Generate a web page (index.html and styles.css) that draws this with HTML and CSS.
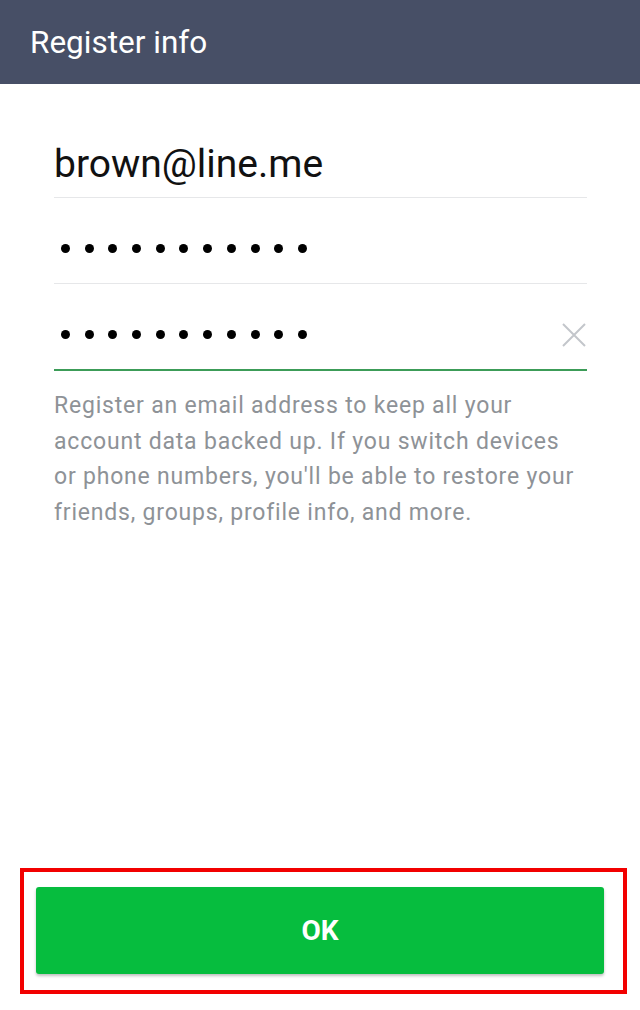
FILE: index.html
```html
<!DOCTYPE html>
<html lang="en">

<head>
    <meta charset="UTF-8">
    <meta name="viewport" content="width=device-width, initial-scale=1.0">
    <title>Register info</title>
    <link rel="stylesheet" href="styles.css">
</head>

<body>
    <header class="bar">
        <h1 class="bar-title">Register info</h1>
    </header>

    <main class="form">
        <div class="field">
            <span class="field-value">brown@line.me</span>
        </div>
        <div class="field field-dots">
            <span class="dots" aria-label="password">
                <i></i><i></i><i></i><i></i><i></i><i></i><i></i><i></i><i></i><i></i><i></i>
            </span>
        </div>
        <div class="field field-dots field-active">
            <span class="dots" aria-label="confirm password">
                <i></i><i></i><i></i><i></i><i></i><i></i><i></i><i></i><i></i><i></i><i></i>
            </span>
            <!-- clear button -->
            <svg class="clear" width="24" height="24" viewBox="0 0 24 24">
                <path d="M1 1L23 23M23 1L1 23" stroke="#c3c6cb" stroke-width="2" fill="none" />
            </svg>
        </div>
        <p class="hint">Register an email address to keep all your account data backed up. If you switch devices or phone numbers, you'll be able to restore your friends, groups, profile info, and more.</p>
    </main>

    <footer class="frame">
        <button class="ok">OK</button>
    </footer>
</body>

</html>
```

FILE: styles.css
```css
body {
    margin: 0px;
    min-height: 100vh;
    display: flex;
    flex-direction: column;
    font-family: Roboto, "Noto Sans", sans-serif;
    background: #ffffff;
}

.bar {
    height: 84px;
    background: #474f66;
    display: flex;
    align-items: center;
    padding-left: 30px;
}

.bar-title {
    margin: 0px;
    font-size: 31.5px;
    font-weight: 400;
    color: #ffffff;
}

.form {
    padding: 28px 53px 0px 54px;
}

.field {
    height: 69px;
    padding-top: 16px;
    display: flex;
    align-items: center;
    border-bottom: 1px solid #e6e7e9;
}

.field-value {
    font-size: 39px;
    line-height: 44px;
    color: #111111;
    padding-top: 2px;
}

.field-active {
    border-bottom: 2px solid #3c9c58;
}

.dots {
    display: flex;
    gap: 14.7px;
    padding-left: 7px;
}

.dots i {
    display: block;
    width: 9px;
    height: 9px;
    border-radius: 50%;
    background: #000000;
}

.clear {
    margin-left: auto;
    margin-right: 1px;
}

.hint {
    margin: 17px 0px 0px 0px;
    font-size: 23px;
    letter-spacing: 0.8px;
    line-height: 35.5px;
    color: #8e9297;
}

.frame {
    margin: auto 13px 16px 20px;
    border: 4px solid #f20000;
    padding: 15px 19px 16px 12px;
}

.ok {
    display: block;
    width: 100%;
    height: 87px;
    border: none;
    border-radius: 3px;
    background: #06bd3e;
    box-shadow: 0px 2px 3px rgba(0, 0, 0, 0.25);
    color: #ffffff;
    font-family: Roboto, "Noto Sans", sans-serif;
    font-size: 28px;
    font-weight: 700;
}
```
